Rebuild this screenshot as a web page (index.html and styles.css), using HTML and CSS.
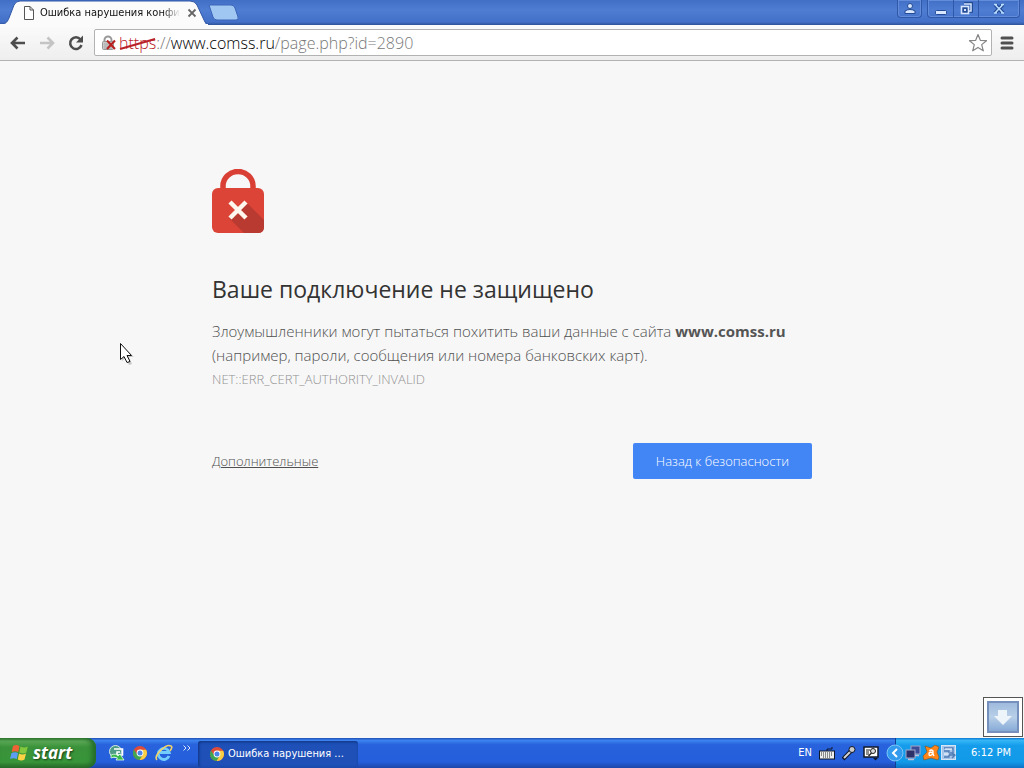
FILE: index.html
```html
<!DOCTYPE html>
<html lang="ru">
<head>
<meta charset="utf-8">
<meta name="viewport" content="width=device-width, initial-scale=1">
<title>Ошибка нарушения конфиденциальности</title>
<link rel="stylesheet" href="styles.css">
</head>
<body>
<svg class="defs" width="0" height="0" aria-hidden="true">
  <symbol id="chrome" viewBox="0 0 16 16">
    <circle cx="8" cy="8" r="7" fill="#dd4b3a"/>
    <path d="M1.9 4.6A7 7 0 0 0 7.6 15L10.8 9.6 8 8 5.2 9.6Z" fill="#3fa652"/>
    <path d="M7.6 15A7 7 0 0 0 14.2 4.8H8L10.9 9.5Z" fill="#f8cf43"/>
    <circle cx="8" cy="8" r="3.4" fill="#fff"/>
    <circle cx="8" cy="8" r="2.5" fill="#4a85e8"/>
  </symbol>
</svg>
<header class="tabstrip">
  <div class="tab">
    <svg class="tab-shape" viewBox="0 0 208 25" preserveAspectRatio="none" aria-hidden="true">
      <path d="M0 25C5 24 7 23 9 18L14 5Q16 1 20 1H190Q195 1 197 5L204 20Q206 25 208 25Z" fill="#fbfbfb" stroke="#3158a6"/>
      <path d="M0 24.5H208" stroke="#fbfbfb"/>
    </svg>
    <svg class="tab-page" width="12" height="16" viewBox="0 0 12 16" aria-hidden="true"><path d="M1.5 1.5H7L10.500 5V14.500H1.500ZM7 1.500V5H10.500" fill="#fff" stroke="#555"/></svg>
    <span class="tab-title">Ошибка нарушения конфи</span>
    <button class="tab-close" aria-label="Закрыть вкладку"><svg width="10" height="10" viewBox="0 0 10 10"><path d="M1.500 1.500 8.500 8.500M8.500 1.500 1.500 8.500" stroke="#666" stroke-width="1.800"/></svg></button>
  </div>
  <button class="new-tab" aria-label="Новая вкладка"><svg width="32" height="17" viewBox="0 0 32 17"><path d="M1 1H23Q26 1 27 4L30 13Q31 16 28 16H9Q6 16 5 13Z" fill="#a0c6f2" stroke="#3c65b8"/></svg></button>
  <div class="window-controls">
    <button class="wc wc-user" aria-label="Профиль"><svg width="14" height="14" viewBox="0 0 14 14"><circle cx="7" cy="4" r="2.500" fill="#d9e8ff" stroke="#234a94"/><path d="M2 11.500V9Q4 7.500 7 7.500T12 9V11.500Z" fill="#d9e8ff" stroke="#234a94"/></svg></button>
    <div class="wc-group">
      <button class="wc" aria-label="Свернуть"><svg width="14" height="14" viewBox="0 0 14 14"><rect x="1.500" y="8.500" width="11" height="4" rx="1" fill="#d9e8ff" stroke="#234a94"/></svg></button>
      <button class="wc" aria-label="Восстановить"><svg width="14" height="14" viewBox="0 0 14 14"><path d="M5 1.500H12.500V9H10" fill="none" stroke="#234a94" stroke-width="3.500"/><path d="M5 2H12V9H10" fill="none" stroke="#d9e8ff" stroke-width="1.500"/><rect x="2.500" y="4.500" width="7" height="7" fill="#244b95" stroke="#d9e8ff" stroke-width="1.600"/><rect x="5" y="7" width="2" height="2" fill="#d9e8ff"/></svg></button>
      <button class="wc wc-wide" aria-label="Закрыть"><svg width="14" height="14" viewBox="0 0 14 14"><path d="M3 2.500 11 11M11 2.500 3 11" stroke="#234a94" stroke-width="4"/><path d="M3.500 3 10.500 10.500M10.500 3 3.500 10.500M2 2.500H5M9 2.500H12M2 11H5M9 11H12" stroke="#b9dcff" stroke-width="1.600"/></svg></button>
    </div>
  </div>
</header>
<nav class="toolbar">
  <button class="tool" aria-label="Назад"><svg width="18" height="16" viewBox="0 0 18 16"><path d="M16 8H3M8.500 2.500 3 8 8.500 13.500" fill="none" stroke="#4d4d4d" stroke-width="2.600"/></svg></button>
  <button class="tool" aria-label="Вперёд" disabled><svg width="18" height="16" viewBox="0 0 18 16"><path d="M2 8H15M9.500 2.500 15 8 9.500 13.500" fill="none" stroke="#c4c4c4" stroke-width="2.600"/></svg></button>
  <button class="tool" aria-label="Обновить"><svg width="18" height="16" viewBox="0 0 18 16"><path d="M13.500 4.500A5.800 5.800 0 1 0 14.500 10" fill="none" stroke="#4d4d4d" stroke-width="2.500"/><path d="M16 .5V7.500H9Z" fill="#4d4d4d"/></svg></button>
  <div class="omnibox">
    <svg width="16" height="16" viewBox="0 0 16 16" aria-hidden="true"><path d="M3.500 7V5A3.500 3.500 0 0 1 10.500 5V7" fill="none" stroke="#999" stroke-width="2"/><rect x="1.500" y="6.500" width="11" height="8" rx="1" fill="#c9c9c9" stroke="#999"/><path d="M3 9H11M3 11H11M3 13H11" stroke="#aaa"/><path d="M6 5.500 14 14M14 5.500 6 14" stroke="#b81f1f" stroke-width="2"/></svg>
    <a class="url" href="#"><span class="url-scheme">https<svg class="url-strike" viewBox="0 0 36 14" preserveAspectRatio="none" aria-hidden="true"><path d="M1 12 35 2" stroke="#b92027" stroke-width="2"/></svg></span><span>://</span><span class="url-host">www.comss.ru</span><span>/page.php?id=2890</span></a>
    <button class="star" aria-label="Добавить в закладки"><svg width="20" height="20" viewBox="0 0 20 20"><path d="M10 1.500 12.300 7.300 18.500 7.700 13.700 11.600 15.300 17.800 10 14.400 4.700 17.800 6.300 11.600 1.500 7.700 7.700 7.300Z" fill="#fff" stroke="#858585" stroke-width="1.200" stroke-linejoin="round"/></svg></button>
  </div>
  <button class="menu" aria-label="Меню"><svg width="14" height="14" viewBox="0 0 14 14"><path d="M2 2H12M2 7H12M2 12H12" stroke="#505050" stroke-width="3" stroke-linecap="round"/></svg></button>
</nav>
<main class="page">
  <article class="warning">
    <svg class="lock" width="52" height="64" viewBox="0 0 52 64" aria-hidden="true">
      <path d="M11 22V17A15 14.500 0 0 1 41 17V22" fill="none" stroke="#d93f35" stroke-width="5.500"/>
      <rect y="19" width="52" height="45" rx="6" fill="#db4437"/>
      <path d="M34 33 52 51V58Q52 64 46 64H32L17 49 26 41Z" fill="#b93a30"/>
      <path d="M18 33 34 49M34 33 18 49" stroke="#fff6ee" stroke-width="4.500"/>
    </svg>
    <h1>Ваше подключение не защищено</h1>
    <p class="message">Злоумышленники могут пытаться похитить ваши данные с сайта <strong>www.comss.ru</strong> (например, пароли, сообщения или номера банковских карт).</p>
    <p class="code">NET::ERR_CERT_AUTHORITY_INVALID</p>
    <div class="actions">
      <a class="details" href="#">Дополнительные</a>
      <button class="primary">Назад к безопасности</button>
    </div>
  </article>
  <button class="download" aria-label="Загрузки"><svg width="32" height="32" viewBox="0 0 32 32"><defs><linearGradient id="dl" x2="0" y2="1"><stop stop-color="#9db9dc"/><stop offset=".5" stop-color="#b8cfe8"/><stop offset="1" stop-color="#83a8d5"/></linearGradient></defs><rect x="1" y="1" width="30" height="30" fill="url(#dl)" stroke="#7590bd" stroke-width="2"/><path d="M11 9H20V15H25L16 24 7 15H11Z" fill="#edf5fb"/></svg></button>
  <svg class="cursor" width="18" height="26" viewBox="0 0 18 26" aria-hidden="true"><path d="M3 4V19L7 16 10 23 13 22 10 15H15Z" fill="#aaa" opacity=".6"/><path d="M1.500 1.500V17.500L5 14.500 8 20.500 11 19.500 8 13.500H12.500Z" fill="#fff" stroke="#111"/></svg>
</main>
<footer class="taskbar">
  <button class="start"><svg width="20" height="20" viewBox="0 0 20 20" aria-hidden="true"><path d="M3 3Q6 1 9.500 3L8.300 9Q5 7.500 1.700 9Z" fill="#ef6235"/><path d="M10.500 3.500Q14 5.500 17.800 3.500L16.300 9.500Q13 11.500 9.300 9.500Z" fill="#83c83e"/><path d="M1.500 10Q5 8.500 8 10L6.800 16Q3.500 14.500 0 16Z" fill="#5d9df3"/><path d="M9 10.500Q12.500 12.500 16 10.500L14.500 16.500Q11.500 18.500 7.800 16.500Z" fill="#fbd345"/></svg><span>start</span></button>
  <div class="quick">
    <svg width="16" height="16" viewBox="0 0 16 16" aria-hidden="true"><circle cx="6.500" cy="6.500" r="6" fill="#4f9c86" stroke="#d6e9e5"/><path d="M5 4H13.500V10H8V7H11" fill="none" stroke="#fff" stroke-width="1.600"/><path d="M2 10Q7 8 9 11L11 9 15 15 7 15 8.500 13Q5 11 2 13Z" fill="#39b94a" stroke="#e5ffe8" stroke-width=".8"/></svg>
    <svg width="16" height="16" aria-hidden="true"><use href="#chrome"/></svg>
    <svg width="18" height="18" viewBox="0 0 18 18" aria-hidden="true"><path d="M14 12A5.500 5.500 0 1 1 14.200 8.500H5" fill="none" stroke="#73cdfc" stroke-width="2.800"/><path d="M2 16C-2 12 11-1 16 2Q18 3 15 7" fill="none" stroke="#f3d368" stroke-width="1.500"/></svg>
    <svg class="chevrons" width="8" height="6" viewBox="0 0 8 6" aria-hidden="true"><path d="M.5.5 3 3 .5 5.500M4.500.5 7 3 4.500 5.500" fill="none" stroke="#dbe8ff"/></svg>
  </div>
  <button class="task"><svg width="16" height="16" aria-hidden="true"><use href="#chrome"/></svg><span>Ошибка нарушения ...</span></button>
  <div class="language">
    <span>EN</span>
    <svg width="16" height="14" viewBox="0 0 16 14" aria-hidden="true"><path d="M8 5V3H13V1" fill="none" stroke="#101828"/><rect x=".5" y="5" width="15" height="8" fill="#eee" stroke="#101828"/><path d="M2 7H14M2 9H14M4 11H12" stroke="#222" stroke-dasharray="1 1"/></svg>
    <svg width="14" height="16" viewBox="0 0 14 16" aria-hidden="true"><path d="M1 14 9 6" stroke="#101828" stroke-width="4"/><path d="M2 13 9 6" stroke="#d4d4d4" stroke-width="2"/><circle cx="10" cy="4.500" r="3" fill="#ccc" stroke="#101828"/></svg>
    <svg width="16" height="16" viewBox="0 0 16 16" aria-hidden="true"><rect x="1" y="2" width="14" height="10" fill="#fff" stroke="#101828" stroke-width="1.500"/><path d="M3 5H7M3 7H6M3 9H6" stroke="#222"/><circle cx="10" cy="6" r="2.500" fill="#ddd" stroke="#222"/><path d="M8.500 8 5.500 11" stroke="#222" stroke-width="1.500"/><path d="M10 13H15L12.500 15.500Z" fill="#101828"/></svg>
  </div>
  <div class="tray">
    <button class="tray-toggle" aria-label="Показать скрытые значки"><svg width="18" height="18" viewBox="0 0 18 18"><circle cx="9" cy="9" r="8" fill="#329bed" stroke="#7cc5fa"/><path d="M11 5 7 9 11 13" fill="none" stroke="#fff" stroke-width="2"/></svg></button>
    <svg width="16" height="16" viewBox="0 0 16 16" aria-hidden="true"><rect x="6" y="1" width="9" height="8" fill="#3b4d96" stroke="#a4a9cb"/><rect x="1" y="5" width="9" height="8" fill="#2c3269" stroke="#a4a9cb"/><path d="M3 14.500H9M10 10.500H14" stroke="#c0c1d8" stroke-width="1.500"/></svg>
    <svg width="18" height="16" viewBox="0 0 18 16" aria-hidden="true"><path d="M3 1 9 3 13 0 17 2 15 7 17 12 16 15 9 13 2 15 1 11 5 7Z" fill="#ff8519" stroke="#7a511f" stroke-width=".6"/><path d="M11 10V6Q9 4 7.500 6M11 8Q7 6 7 9T11 9L12 11" fill="none" stroke="#fff" stroke-width="1.400"/></svg>
    <svg width="16" height="16" viewBox="0 0 16 16" aria-hidden="true"><rect x=".5" y=".5" width="14" height="14" fill="#a7c5e8" stroke="#d6e5f6"/><path d="M3 3H12V8H9M3 6H8V12H3M8 10H14M11 8 14 10 11 13" fill="none" stroke="#4f7cb4" stroke-width="1.300"/><path d="M4 4H11M3 9H8" stroke="#fff"/></svg>
    <time>6:12 PM</time>
  </div>
</footer>
</body>
</html>
```

FILE: styles.css
```css
* { box-sizing: border-box; }
html, body { height: 100%; }
body {
  margin: 0;
  display: flex;
  flex-direction: column;
  overflow: hidden;
  font-family: "Open Sans", "Noto Sans", sans-serif;
  font-size: 13px;
  background: #f7f7f7;
}
button { padding: 0; border: 0; background: none; color: inherit; font: inherit; }
svg { display: block; flex: none; }
.defs { position: absolute; }

.tabstrip {
  flex: none;
  display: flex;
  height: 25px;
  background: linear-gradient(#416fc6, #4e7dd2 40%, #4370c8 88%, #2d5299);
}
.tab {
  position: relative;
  display: flex;
  align-items: center;
  gap: 5px;
  width: 208px;
  padding: 1px 9px 0 23px;
}
.tab-shape { position: absolute; left: 0; top: 0; width: 100%; height: 100%; }
.tab-page, .tab-title, .tab-close { position: relative; }
.tab-title {
  flex: 1;
  white-space: nowrap;
  font: 11px/16px "DejaVu Sans Condensed", "DejaVu Sans", sans-serif;
  font-stretch: condensed;
  color: #111;
  mask-image: linear-gradient(90deg, #000 88%, transparent);
}
.tab-close { width: 14px; height: 16px; display: grid; place-items: center; }
.new-tab { align-self: center; }
.window-controls { display: flex; gap: 5px; margin: 0 4px 0 auto; height: 18px; }
.wc { display: grid; place-items: center; width: 25px; height: 17px; }
.wc-user, .wc-group { height: 18px; border: 1px solid #3058a8; border-top: 0; border-radius: 0 0 4px 4px; box-shadow: inset 0 0 0 1px #638ddb; }
.wc-group { display: flex; }
.wc-group .wc + .wc { border-left: 1px solid #3058a8; }
.wc-group .wc-wide { width: 41px; }

.toolbar {
  flex: none;
  display: flex;
  align-items: center;
  height: 36px;
  padding: 0 10px 0 3px;
  background: linear-gradient(#fbfbfb, #eeeeee);
  border-bottom: 1px solid #b1b1b1;
}
.tool { display: grid; place-items: center; width: 29px; height: 28px; }
.omnibox {
  flex: 1;
  min-width: 0;
  display: flex;
  align-items: center;
  height: 27px;
  padding: 0 3px 0 6px;
  margin: 0 8px 0 4px;
  background: #fff;
  border: 1px solid #b2b2b2;
  border-radius: 2px;
}
.url {
  flex: 1;
  margin-left: 2px;
  white-space: nowrap;
  overflow: hidden;
  text-decoration: none;
  font-size: 16px;
  line-height: 24px;
  font-weight: 300;
  color: #777;
}
.url-scheme { position: relative; color: #b92027; }
.url-strike { position: absolute; left: 0; top: 5px; width: 100%; height: 14px; }
.url-host { color: #000; }

.page { flex: 1; min-height: 0; position: relative; padding: 108px 24px 0; }
.warning { max-width: 600px; margin: 0 auto; color: #505050; font-weight: 300; }
h1 { margin: 40px 0 14px; font-size: 23px; line-height: 32px; font-weight: 400; color: #333; }
.message { margin: 0; font-size: 15px; line-height: 24px; }
.message strong { font-weight: 700; color: #555; }
.code { margin: 0; font-size: 13px; line-height: 24px; color: #929292; }
.actions { display: flex; justify-content: space-between; align-items: center; margin-top: 52px; }
.details { color: #505050; font-size: 13px; }
.primary { height: 36px; padding: 0 23px; border-radius: 2px; background: #4285f4; color: #fff; font-size: 13px; }
.download {
  position: absolute;
  right: 1px;
  bottom: 1px;
  display: grid;
  place-items: center;
  width: 40px;
  height: 40px;
  background: #fff;
  border: 1px solid #555;
}
.cursor { position: absolute; left: 119px; top: 281px; }

.taskbar {
  flex: none;
  display: flex;
  height: 30px;
  color: #fff;
  background: linear-gradient(#1e4fb5, #3c83ef 8%, #2862dc 22%, #245edb 80%, #1c46a8);
  font: 11px/14px "DejaVu Sans Condensed", "DejaVu Sans", sans-serif;
  font-stretch: condensed;
}
.start {
  display: flex;
  align-items: center;
  gap: 3px;
  width: 96px;
  padding-left: 10px;
  border-radius: 0 9px 9px 0;
  background: linear-gradient(#317d30, #5daa58 10%, #3a923a 30%, #389539 80%, #286b29);
  box-shadow: inset -4px 0 5px #246c2b;
  font: italic bold 17px/24px "Open Sans", sans-serif;
  text-shadow: 1px 1px 2px #173e18;
}
.quick { display: flex; align-items: center; gap: 7px; width: 102px; padding: 0 7px 0 13px; }
.chevrons { align-self: flex-start; margin: 7px 0 0 auto; }
.task {
  display: flex;
  align-items: center;
  gap: 3px;
  width: 160px;
  height: 26px;
  margin-top: 3px;
  padding-left: 11px;
  border-radius: 3px;
  background: #1e50b8;
  box-shadow: inset 1px 1px 3px #10347e;
}
.language { display: flex; align-items: center; gap: 7px; margin-left: auto; padding-right: 16px; }
.tray {
  display: flex;
  align-items: center;
  gap: 1px;
  width: 129px;
  border-left: 1px solid #103f94;
  background: linear-gradient(#0f79d2, #35b7f6 8%, #159ceb 25%, #119ae8 80%, #0d73c5);
}
.tray-toggle { margin-left: -10px; }
.tray time { margin: 0 auto; }
```
